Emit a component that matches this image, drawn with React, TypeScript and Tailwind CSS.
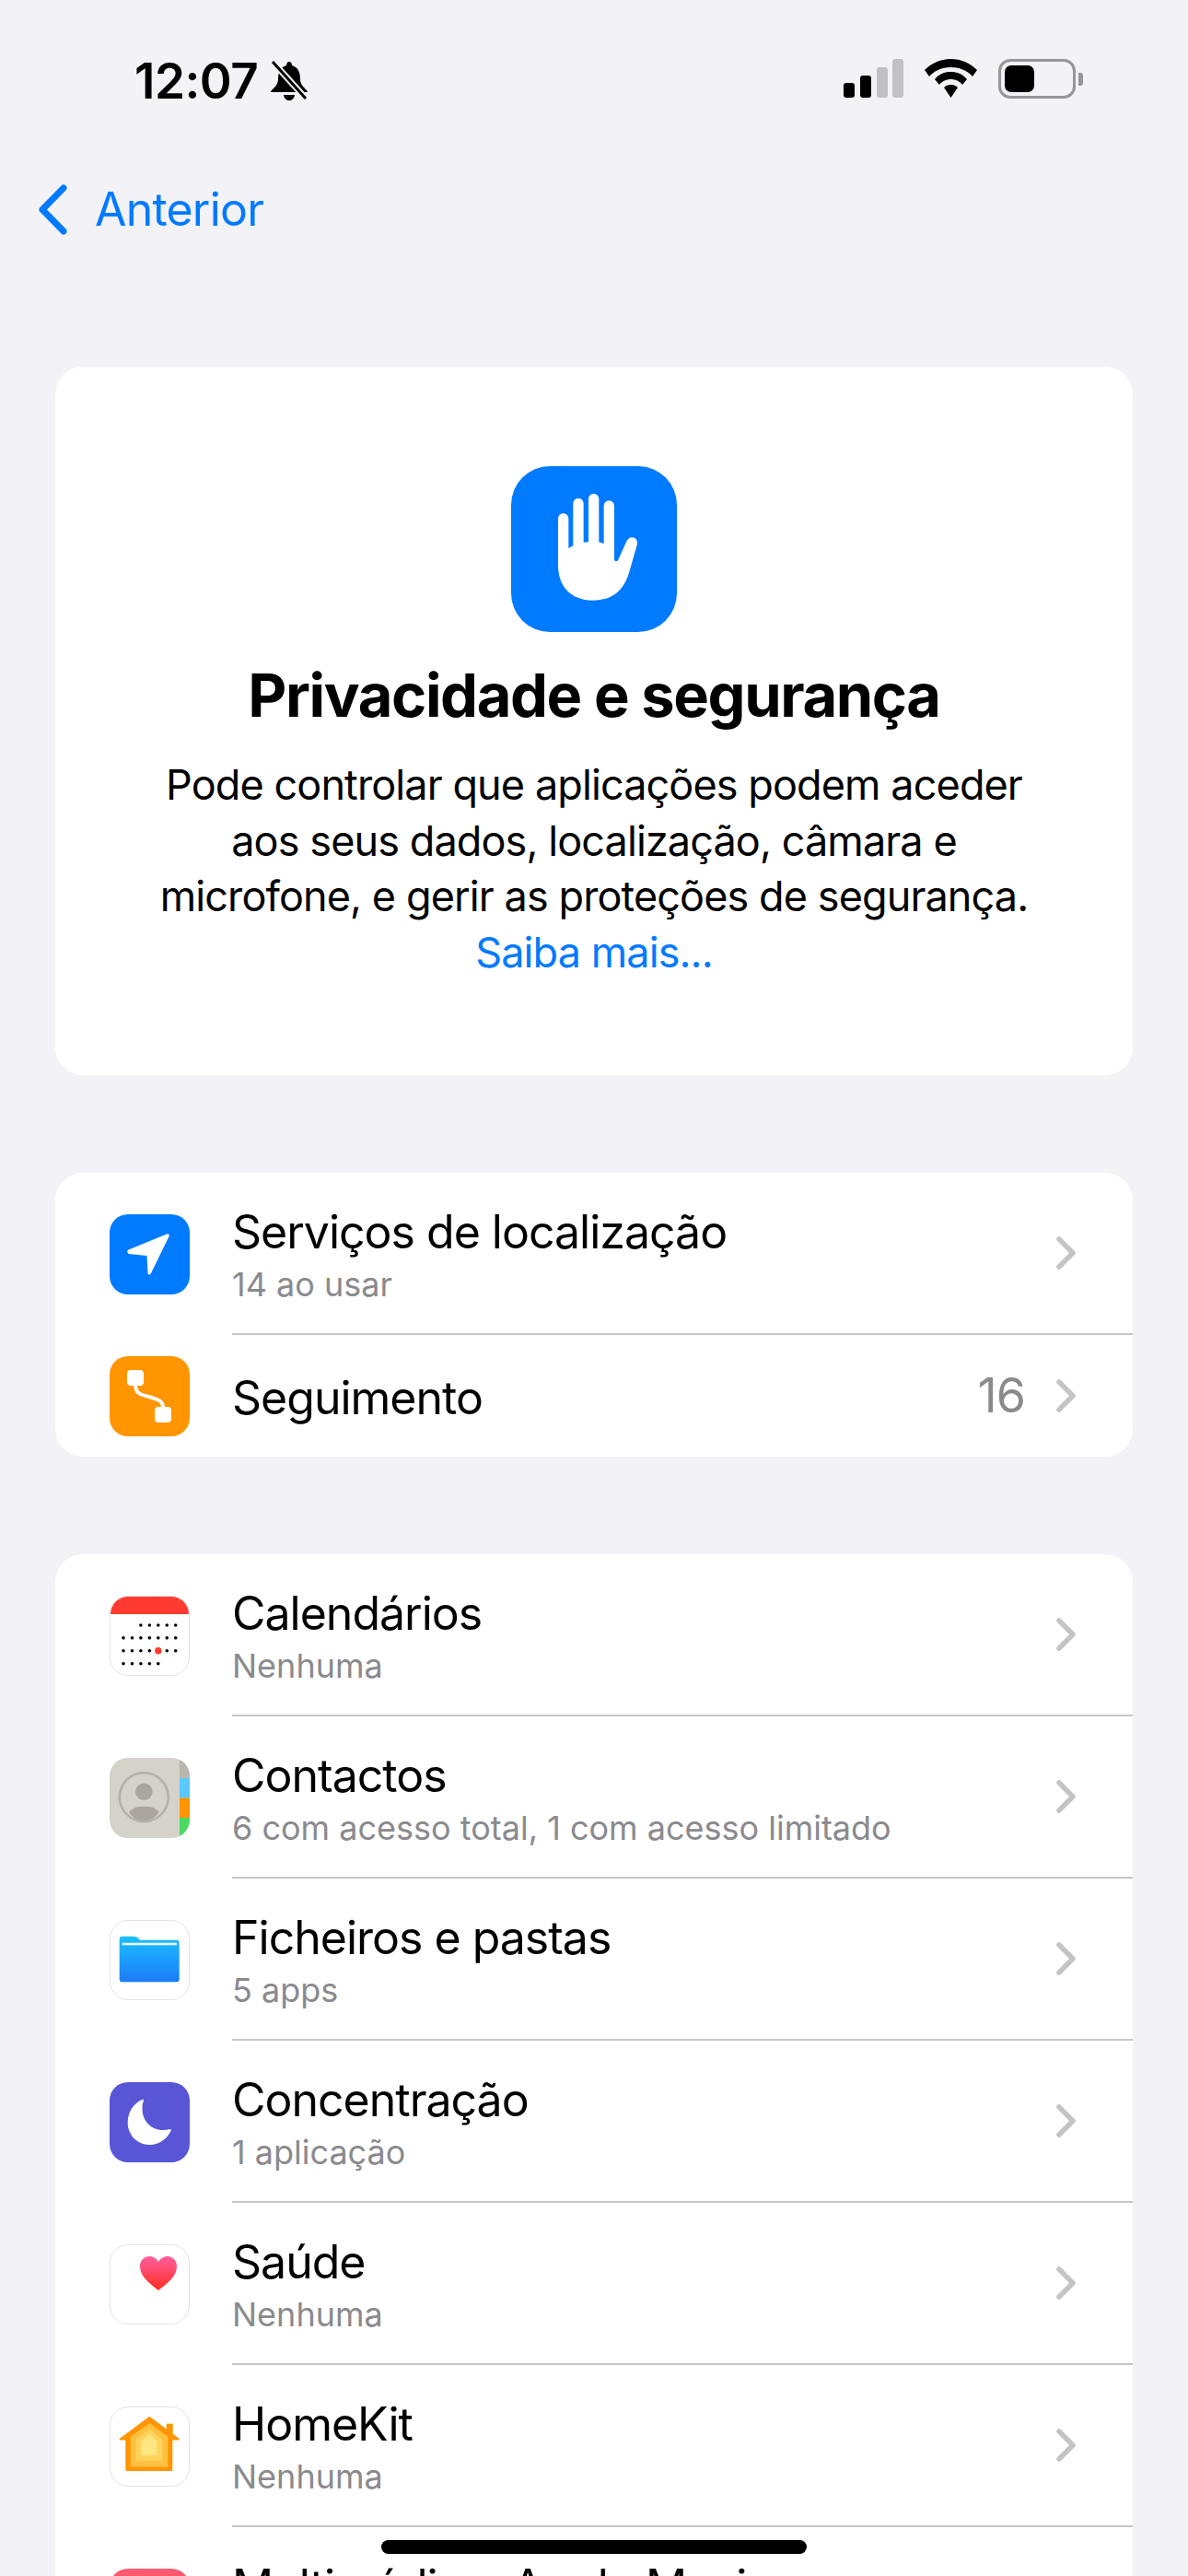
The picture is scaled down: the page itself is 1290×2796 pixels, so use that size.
import type { ReactNode } from "react"

const font = { fontFamily: "Inter, sans-serif" }

function IconBox({ className = "", children }: { className?: string; children?: ReactNode }) {
  return (
    <div className={`relative h-[87px] w-[87px] shrink-0 overflow-hidden rounded-[20px] ${className}`}>
      {children}
    </div>
  )
}

function LocationIcon() {
  return (
    <IconBox className="bg-[#007aff]">
      <svg viewBox="0 0 87 87" className="h-full w-full">
        <path
          d="M20.500 38.600 L62 21.500 Q65.500 20.500 64.500 24 L45 64 Q42.500 67.500 41.500 64 L40.500 45 L21 43 Q17.500 40.500 20.500 38.600 Z"
          fill="white"
        />
      </svg>
    </IconBox>
  )
}

function TrackingIcon() {
  return (
    <IconBox className="bg-[#ff9500]">
      <svg viewBox="0 0 87 87" className="h-full w-full">
        <rect x="19" y="15" width="18" height="17" rx="4" fill="white" />
        <rect x="49" y="55" width="18" height="17" rx="4" fill="white" />
        <path d="M28 31 C28 42 36 42 44 44.500 C52 47 58 48 58 56" stroke="white" strokeWidth="4" fill="none" />
      </svg>
    </IconBox>
  )
}

function CalendarIcon() {
  const rows = [
    { y: 32, cols: [2, 3, 4, 5, 6] },
    { y: 45.7, cols: [0, 1, 2, 3, 4, 5, 6] },
    { y: 59.7, cols: [0, 1, 2, 3, 5, 6] },
    { y: 73.7, cols: [0, 1, 2, 3, 4] },
  ]
  return (
    <IconBox className="border border-[#e3e3e3] bg-white">
      <svg viewBox="0 0 87 87" className="absolute -left-px -top-px h-[87px] w-[87px]">
        <rect x="0" y="0" width="87" height="20" fill="#ff3b30" />
        {rows.map((row) =>
          row.cols.map((c) => <circle key={`${row.y}-${c}`} cx={15 + c * 9.45} cy={row.y} r="1.8" fill="black" />),
        )}
        <circle cx="52.800" cy="59.700" r="3.700" fill="#ff3b30" />
      </svg>
    </IconBox>
  )
}

function ContactsIcon() {
  return (
    <IconBox className="bg-[#d5d2ca]">
      <svg viewBox="0 0 87 87" className="h-full w-full">
        <rect x="76" y="0" width="11" height="22" fill="#b9b6ae" />
        <rect x="76" y="22" width="11" height="21.500" fill="#5ac8fa" />
        <rect x="76" y="43.500" width="11" height="21.500" fill="#ff9500" />
        <rect x="76" y="65" width="11" height="22" fill="#4cd964" />
        <circle cx="37.300" cy="42.700" r="26.500" fill="none" stroke="#b5b0a8" strokeWidth="2.600" />
        <circle cx="37.300" cy="36.700" r="9.300" fill="#aaa59d" />
        <path
          d="M21 58.700 C26 53 33 52.700 37.300 52.700 C42 52.700 49 53 53.600 58.700 C49 66 43 68 37.300 68 C31 68 25 66 21 58.700 Z"
          fill="#aaa59d"
        />
      </svg>
    </IconBox>
  )
}

function FilesIcon() {
  return (
    <IconBox className="border border-[#e3e3e3] bg-white">
      <svg viewBox="0 0 87 87" className="absolute -left-px -top-px h-[87px] w-[87px]">
        <defs>
          <linearGradient id="folder" x1="0" y1="0" x2="0" y2="1">
            <stop offset="0" stopColor="#1bc0ff" />
            <stop offset="1" stopColor="#1c7bf6" />
          </linearGradient>
        </defs>
        <path
          d="M10.700 20.700 Q10.700 17.700 13.700 17.700 L26 17.700 Q29.500 17.700 31.500 20 L33 21.700 L72.700 21.700 Q75.700 21.700 75.700 24.700 L75.700 64.300 Q75.700 67.300 72.700 67.300 L13.700 67.300 Q10.700 67.300 10.700 64.300 Z"
          fill="url(#folder)"
        />
        <rect x="13.700" y="24.700" width="59.300" height="2.600" fill="#e6f7ff" />
      </svg>
    </IconBox>
  )
}

function FocusIcon() {
  return (
    <IconBox className="bg-[#5856d6]">
      <svg viewBox="0 0 87 87" className="h-full w-full">
        <path
          d="M36 18.800 C37 18.400 37.200 19.400 36.800 20.500 C35.800 23 35.500 26 35.500 29 C35.500 42 45 52 58 52 C60.500 52 63 51.600 65.200 51 C66.600 50.700 67.200 51.800 66.500 53 C62 62 53 68 43.500 68 C30 68 19.700 57 19.700 44 C19.700 32 26.500 22.500 36 18.800 Z"
          fill="white"
        />
      </svg>
    </IconBox>
  )
}

function HealthIcon() {
  return (
    <IconBox className="border border-[#e3e3e3] bg-white">
      <svg viewBox="0 0 87 87" className="absolute -left-px -top-px h-[87px] w-[87px]">
        <defs>
          <linearGradient id="heart" x1="0" y1="0" x2="0" y2="1">
            <stop offset="0" stopColor="#ff5f9e" />
            <stop offset="1" stopColor="#ff2d20" />
          </linearGradient>
        </defs>
        <path
          d="M53 50 C44 43 33 35 33 24 C33 17 38 13 43 13 C47.500 13 51 15.500 53 19 C55 15.500 58.500 13 63 13 C68 13 73 17 73 24 C73 35 62 43 53 50 Z"
          fill="url(#heart)"
        />
      </svg>
    </IconBox>
  )
}

function HomeIcon() {
  return (
    <IconBox className="border border-[#e3e3e3] bg-white">
      <svg viewBox="0 0 87 87" className="absolute -left-px -top-px h-[87px] w-[87px]">
        <rect x="61.700" y="18.700" width="7" height="18" fill="#ff9500" />
        <path d="M43.300 10.700 L75.700 35 L75.700 36.500 L68.300 36.500 L68.300 68.500 Q68.300 70 66.800 70 L18.800 70 Q17.300 70 17.300 68.500 L17.300 36.500 L10.700 36.500 L10.700 35 Z" fill="#ff9500" />
        <path d="M43.300 18 L63.300 33 L63.300 65.500 L22.700 65.500 L22.700 33 Z" fill="#ffc042" />
        <path d="M43.300 24 L57.300 36 L57.300 59 L28.700 59 L28.700 36 Z" fill="#ffd35c" />
        <path d="M43.300 30 L51.300 38 L51.300 53 L34.700 53 L34.700 38 Z" fill="#ffe783" />
      </svg>
    </IconBox>
  )
}

function MusicIcon() {
  return <IconBox className="bg-gradient-to-b from-[#fb5c74] to-[#fa233b]" />
}

function Chevron() {
  return (
    <svg viewBox="0 0 21 36" className="h-[36px] w-[21px] shrink-0">
      <path d="M3 3 L18 18 L3 33" fill="none" stroke="#c4c4c7" strokeWidth="5.500" strokeLinecap="round" strokeLinejoin="round" />
    </svg>
  )
}

type RowProps = {
  icon: ReactNode
  title: string
  subtitle?: string
  value?: string
  last?: boolean
}

function Row({ icon, title, subtitle, value, last }: RowProps) {
  return (
    <div className={`flex items-center pl-[59px] ${subtitle ? "h-[176px]" : "h-[132px]"}`}>
      {icon}
      <div
        className={`ml-[46px] flex h-full min-w-0 flex-1 items-center pr-[62px] ${last ? "" : "border-b-2 border-[#c6c6c8]"}`}
      >
        <div className="flex-1 pt-[3px]">
          <div className="text-[50px] leading-[60px] tracking-[-1px] text-black">{title}</div>
          {subtitle && <div className="mt-[5px] text-[36px] leading-[44px] text-[#8a8a8e]">{subtitle}</div>}
        </div>
        {value && <span className="mr-[34px] text-[52px] tracking-[-1px] text-[#8a8a8e]">{value}</span>}
        <Chevron />
      </div>
    </div>
  )
}

export default function App() {
  return (
    <div className="relative h-[2796px] w-[1290px] overflow-hidden bg-[#f2f2f7]" style={font}>
      {/* status bar */}
      <div className="flex h-[167px] items-start justify-between pl-[146px] pr-[114px] pt-[56px]">
        <div className="flex items-center gap-[13px]">
          <span className="text-[53px] font-semibold leading-[64px] tracking-[-0.5px] text-black">12:07</span>
          <svg viewBox="0 0 42 44" className="h-[44px] w-[42px]">
            <path
              d="M21 1 C23 1 24 3 24 5 C31 7 33 13 33 20 C33 28 40 30 41 34 L1 34 C2 30 9 28 9 20 C9 13 11 7 18 5 C18 3 19 1 21 1 Z"
              fill="black"
            />
            <path d="M15 37 L27 37 C26 45 16 45 15 37 Z" fill="black" />
            <path d="M3 1 L41 43" stroke="#f2f2f7" strokeWidth="7" />
            <path d="M3 1 L39 41" stroke="black" strokeWidth="3" />
          </svg>
        </div>
        <div className="flex items-start pt-[8px]">
          <svg viewBox="0 0 65 42" className="h-[42px] w-[65px]">
            <rect x="0" y="26" width="12" height="16" rx="3" fill="black" />
            <rect x="18" y="18" width="12" height="24" rx="3" fill="black" />
            <rect x="36" y="9" width="12" height="33" rx="3" fill="#c1c1c4" />
            <rect x="53" y="0" width="12" height="42" rx="3" fill="#c1c1c4" />
          </svg>
          <svg viewBox="0 0 57 42" className="ml-[23px] h-[42px] w-[57px]">
            <path d="M28.500 0 C39 0 49 4 57 12 L52 19 C46 12 37 9 28.500 9 C20 9 11 12 5 19 L0 12 C8 4 18 0 28.500 0 Z" fill="black" />
            <path d="M28.500 14 C35 14 41 16 46 22 L41 28 C38 24 33 22 28.500 22 C24 22 19 24 16 28 L11 22 C16 16 22 14 28.500 14 Z" fill="black" />
            <path d="M28.500 28 C32 28 34 29 36 31 L28.500 42 L21 31 C23 29 25 28 28.500 28 Z" fill="black" />
          </svg>
          <div className="ml-[23px] flex items-center">
            <div className="h-[43px] w-[84px] rounded-[13px] border-[3px] border-[#969699] p-[4px]">
              <div className="h-full w-[32px] rounded-[7px] bg-black" />
            </div>
            <div className="ml-[3px] h-[14px] w-[5px] rounded-r-[3px] bg-[#969699]" />
          </div>
        </div>
      </div>

      {/* nav */}
      <div className="flex h-[120px] items-center pl-[40px] text-[#007aff]">
        <svg viewBox="0 0 34 57" className="h-[57px] w-[34px]">
          <path d="M29 5 L6 28.500 L29 52" fill="none" stroke="#007aff" strokeWidth="7" strokeLinecap="round" strokeLinejoin="round" />
        </svg>
        <span className="ml-[29px] text-[50px] tracking-[-0.8px]">Anterior</span>
      </div>

      {/* hero */}
      <div className="mx-[60px] mt-[111px] flex h-[769px] flex-col items-center rounded-[30px] bg-white pt-[108px]">
        <div className="h-[180px] w-[180px] rounded-[42px] bg-[#007aff]">
          <svg viewBox="165 78 540 540" className="h-full w-full">
            <path
              d="M318 250 C318 226 352 226 352 250 L352 345 L367 337 L367 200 C367 177 401 177 401 200 L401 326 L417 325 L417 185 C417 162 451 162 451 185 L451 325 L467 330 L467 208 C467 185 501 185 501 208 L501 380 C501 390 512 390 515 380 L540 325 C550 300 582 308 575 335 L552 415 C535 480 500 515 430 515 C360 515 318 470 318 400 Z"
              fill="white"
            />
          </svg>
        </div>
        <h1 className="mt-[29px] text-[65px] font-bold leading-[80px] tracking-[-1.4px] text-black">
          Privacidade e segurança
        </h1>
        <p className="mt-[27px] w-[1100px] text-center text-[45px] leading-[60.500px] tracking-[-0.9px] text-black">
          Pode controlar que aplicações podem aceder
          <br />
          aos seus dados, localização, câmara e
          <br />
          microfone, e gerir as proteções de segurança.
          <br />
          <span className="text-[#007aff]">Saiba mais...</span>
        </p>
      </div>

      {/* location + tracking */}
      <div className="mx-[60px] mt-[106px] overflow-hidden rounded-[30px] bg-white">
        <Row icon={<LocationIcon />} title="Serviços de localização" subtitle="14 ao usar" />
        <Row icon={<TrackingIcon />} title="Seguimento" value="16" last />
      </div>

      {/* app list */}
      <div className="mx-[60px] mt-[106px] overflow-hidden rounded-t-[30px] bg-white">
        <Row icon={<CalendarIcon />} title="Calendários" subtitle="Nenhuma" />
        <Row icon={<ContactsIcon />} title="Contactos" subtitle="6 com acesso total, 1 com acesso limitado" />
        <Row icon={<FilesIcon />} title="Ficheiros e pastas" subtitle="5 apps" />
        <Row icon={<FocusIcon />} title="Concentração" subtitle="1 aplicação" />
        <Row icon={<HealthIcon />} title="Saúde" subtitle="Nenhuma" />
        <Row icon={<HomeIcon />} title="HomeKit" subtitle="Nenhuma" />
        <Row icon={<MusicIcon />} title="Multimédia e Apple Music" subtitle="Nenhuma" />
      </div>

      {/* home indicator */}
      <div className="absolute left-[414px] top-[2757px] h-[15px] w-[462px] rounded-full bg-black" />
    </div>
  )
}
